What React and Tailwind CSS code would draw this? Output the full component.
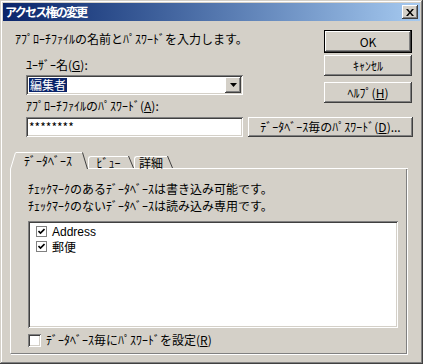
import React from "react";

const raised =
  "bg-[#d4d0c8] shadow-[inset_-1px_-1px_#404040,inset_1px_1px_#ffffff,inset_-2px_-2px_#808080,inset_2px_2px_#d4d0c8]";
const sunken =
  "bg-white shadow-[inset_1px_1px_#808080,inset_-1px_-1px_#ffffff,inset_2px_2px_#404040,inset_-2px_-2px_#d4d0c8]";

const Btn = ({ children, className = "" }) => (
  <div
    className={`flex items-center justify-center text-black leading-[14px] ${raised} ${className}`}
  >
    {children}
  </div>
);

const Check = ({ size = 11 }) => (
  <svg width={size - 4} height={size - 4} viewBox="0 0 7 7">
    <path d="M0.5 3 L2.5 5 L6.5 1" fill="none" stroke="#000" strokeWidth="1.6" />
  </svg>
);

const ListItem = ({ label }) => (
  <div className="flex items-center h-[15px] gap-[5px]">
    <div className="w-[11px] h-[11px] border border-[#808080] bg-white flex items-center justify-center">
      <Check />
    </div>
    <span className="leading-[14px]">{label}</span>
  </div>
);

// unselected tab with "\" right edge
const Tab = ({ label, w }) => (
  <div className="flex items-end h-[13px]">
    <div
      className={`h-[13px] border-l border-t border-b border-white rounded-tl-[3px] leading-[11px] text-center ${w}`}
    >
      {label}
    </div>
    <svg width="6" height="13" className="block">
      <line x1="0.5" y1="0" x2="5.5" y2="12" stroke="#404040" />
      <line x1="0" y1="12.5" x2="6" y2="12.5" stroke="#ffffff" />
    </svg>
  </div>
);

export default function App() {
  return (
    <div className="w-[423px] h-[364px] bg-[#d4d0c8] p-[3px] text-[12px] text-black font-['Noto_Sans_CJK_JP',sans-serif] shadow-[inset_-1px_-1px_#404040,inset_1px_1px_#d4d0c8,inset_-2px_-2px_#808080,inset_2px_2px_#ffffff] flex flex-col">
      {/* title bar */}
      <div className="h-[18px] flex items-center justify-between bg-gradient-to-r from-[#0a246a] to-[#a6caf0] pl-[2px] pr-[2px]">
        <span className="text-white font-bold leading-[16px] tracking-[-1.75px]">アクセス権の変更</span>
        <div className={`w-[16px] h-[14px] flex items-center justify-center ${raised}`}>
          <svg width="8" height="7" viewBox="0 0 8 7">
            <path d="M0 0h2l2 2.5L6 0h2L5 3.5 8 7H6L4 4.5 2 7H0l3-3.5z" fill="#000" />
          </svg>
        </div>
      </div>

      {/* top section */}
      <div className="flex pt-[9px] pl-[12px] pr-[8px]">
        <div className="flex-1">
          <div className="mt-[1px] leading-[16px] whitespace-nowrap">
            ｱﾌﾟﾛｰﾁﾌｧｲﾙの名前とﾊﾟｽﾜｰﾄﾞを入力します。
          </div>
          <div className="ml-[11px] mt-[11px] leading-[14px]">
            ﾕｰｻﾞｰ名(<span className="underline">G</span>):
          </div>
          <div className={`ml-[11px] mt-[3px] w-[217px] h-[20px] flex items-center justify-between p-[2px] ${sunken}`}>
            <span className="ml-[1px] bg-[#0a246a] text-white leading-[14px] px-[1px]">編集者</span>
            <div className={`w-[16px] h-[16px] flex items-center justify-center ${raised}`}>
              <svg width="7" height="4" viewBox="0 0 7 4">
                <path d="M0 0h7L3.5 4z" fill="#000" />
              </svg>
            </div>
          </div>
          <div className="ml-[11px] mt-[4px] leading-[14px] whitespace-nowrap">
            ｱﾌﾟﾛｰﾁﾌｧｲﾙのﾊﾟｽﾜｰﾄﾞ(<span className="underline">A</span>):
          </div>
        </div>
        <div className="w-[88px] flex flex-col">
          <div className="h-[23px] border border-black">
            <Btn className="h-full">OK</Btn>
          </div>
          <Btn className="h-[21px] mt-[2px]">ｷｬﾝｾﾙ</Btn>
          <Btn className="h-[21px] mt-[6px]">
            ﾍﾙﾌﾟ(<span className="underline">H</span>)
          </Btn>
        </div>
      </div>

      {/* password row */}
      <div className="flex mt-[4px] pl-[23px] gap-[5px]">
        <div className={`w-[217px] h-[20px] flex items-center pl-[3px] leading-[14px] ${sunken}`}>
          ********
        </div>
        <Btn className="w-[165px] h-[20px]">
          ﾃﾞｰﾀﾍﾞｰｽ毎のﾊﾟｽﾜｰﾄﾞ(<span className="underline">D</span>)...
        </Btn>
      </div>

      {/* tab strip */}
      <div className="flex items-end h-[17px] mt-[15px] ml-[7px] w-[398px]">
        <div className="flex items-end h-[17px]">
          <svg width="6" height="17" className="block">
            <line x1="0.5" y1="17" x2="5.5" y2="0.5" stroke="#ffffff" />
          </svg>
          <div className="h-[17px] border-t border-white pl-[8px] pr-[10px] leading-[15px]">
            ﾃﾞｰﾀﾍﾞｰｽ
          </div>
          <svg width="6" height="17" className="block">
            <line x1="0.5" y1="0.5" x2="5.5" y2="17" stroke="#404040" />
          </svg>
        </div>
        <Tab label="ﾋﾞｭｰ" w="w-[40px]" />
        <Tab label="詳細" w="w-[33px]" />
        <div className="flex-1 border-b border-white" />
      </div>

      {/* tab panel */}
      <div className="ml-[7px] w-[397px] border-l border-r border-b border-l-white border-r-[#808080] border-b-[#808080] shadow-[1px_1px_0_#ffffff] pt-[11px] pl-[17px] pb-[6px]">
        <div className="leading-[17px] whitespace-nowrap">
          <div>ﾁｪｯｸﾏｰｸのあるﾃﾞｰﾀﾍﾞｰｽは書き込み可能です。</div>
          <div>ﾁｪｯｸﾏｰｸのないﾃﾞｰﾀﾍﾞｰｽは読み込み専用です。</div>
        </div>
        <div className={`mt-[7px] w-[370px] h-[107px] pt-[3px] pl-[8px] ${sunken}`}>
          <ListItem label={<span className="font-['Liberation_Sans',sans-serif]">Address</span>} />
          <ListItem label="郵便" />
        </div>
        <div className="mt-[5px] flex items-center gap-[5px] h-[14px]">
          <div className={`w-[13px] h-[13px] ${sunken}`} />
          <span className="leading-[14px]">
            ﾃﾞｰﾀﾍﾞｰｽ毎にﾊﾟｽﾜｰﾄﾞを設定(<span className="underline">R</span>)
          </span>
        </div>
      </div>
    </div>
  );
}
